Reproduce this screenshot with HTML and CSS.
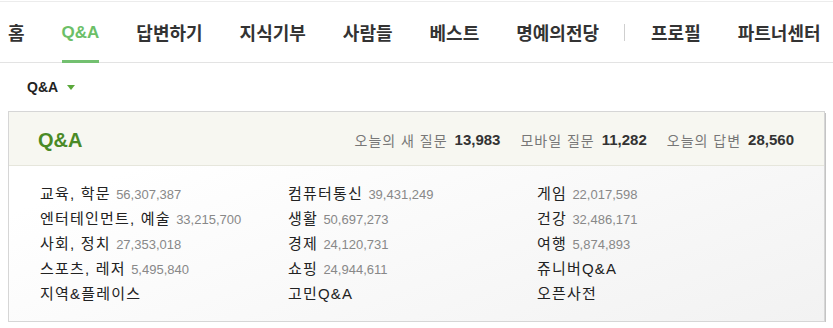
FILE: index.html
```html
<!DOCTYPE html>
<html>
  <head>
    <meta charset="utf-8" />
    <link rel="stylesheet" href="styles.css">
  </head>
  <body>
    <ul class="gnb">
      <li><a href="#">홈</a></li>
      <li class="on"><a href="#">Q&amp;A</a></li>
      <li><a href="#">답변하기</a></li>
      <li><a href="#">지식기부</a></li>
      <li><a href="#">사람들</a></li>
      <li><a href="#">베스트</a></li>
      <li><a href="#">명예의전당</a></li>
      <li class="bar"></li>
      <li><a href="#">프로필</a></li>
      <li><a href="#">파트너센터</a></li>
    </ul>

    <div class="lnb">
      <span class="lnb-title">Q&amp;A</span>
      <span class="caret"></span>
    </div>

    <div class="section">
      <div class="section-head">
        <h2>Q&amp;A</h2>
        <dl class="stats">
          <dt>오늘의 새 질문</dt><dd>13,983</dd>
          <dt>모바일 질문</dt><dd>11,282</dd>
          <dt>오늘의 답변</dt><dd>28,560</dd>
        </dl>
      </div>
      <div class="section-body">
        <ul class="dir">
          <li><a href="#">교육, 학문</a> <span class="cnt">56,307,387</span></li>
          <li><a href="#">엔터테인먼트, 예술</a> <span class="cnt">33,215,700</span></li>
          <li><a href="#">사회, 정치</a> <span class="cnt">27,353,018</span></li>
          <li><a href="#">스포츠, 레저</a> <span class="cnt">5,495,840</span></li>
          <li><a href="#">지역&amp;플레이스</a></li>
        </ul>
        <ul class="dir">
          <li><a href="#">컴퓨터통신</a> <span class="cnt">39,431,249</span></li>
          <li><a href="#">생활</a> <span class="cnt">50,697,273</span></li>
          <li><a href="#">경제</a> <span class="cnt">24,120,731</span></li>
          <li><a href="#">쇼핑</a> <span class="cnt">24,944,611</span></li>
          <li><a href="#">고민Q&amp;A</a></li>
        </ul>
        <ul class="dir">
          <li><a href="#">게임</a> <span class="cnt">22,017,598</span></li>
          <li><a href="#">건강</a> <span class="cnt">32,486,171</span></li>
          <li><a href="#">여행</a> <span class="cnt">5,874,893</span></li>
          <li><a href="#">쥬니버Q&amp;A</a></li>
          <li><a href="#">오픈사전</a></li>
        </ul>
      </div>
    </div>
  </body>
</html>
```

FILE: styles.css
```css
body {
  margin: 0;
  font-family: "Liberation Sans", "Noto Sans CJK KR", sans-serif;
  color: #222;
  background: #fff;
}
a {
  color: inherit;
  text-decoration: none;
}
ul, dl, dd, h2 {
  margin: 0;
  padding: 0;
  list-style: none;
}

.gnb {
  display: flex;
  gap: 37px;
  margin-top: 1px;
  padding-left: 8px;
  height: 60px;
  border-top: 1px solid #ececec;
  border-bottom: 1px solid #e3e3e3;
  font-size: 18px;
  font-weight: 700;
  color: #333;
}
.gnb li {
  display: flex;
  align-items: center;
}
.gnb li.on {
  margin-bottom: -1px;
  padding-top: 3px;
  border-bottom: 3px solid #73c070;
  font-size: 17px;
  color: #6cbf68;
}
.gnb li.bar {
  align-self: center;
  width: 1px;
  height: 17px;
  margin: 0 -11px 0 -12px;
  background: #cfcfcf;
}

.lnb {
  display: flex;
  align-items: center;
  height: 48px;
  padding-left: 27px;
}
.lnb-title {
  font-size: 14px;
  font-weight: 700;
  color: #222;
}
.caret {
  margin-left: 9px;
  border-left: 4px solid transparent;
  border-right: 4px solid transparent;
  border-top: 5px solid #5aa83a;
}

.section {
  margin-left: 8px;
  width: 815px;
  border: 1px solid #d6d6d6;
  box-shadow: 1px 2px 0 #c4c4c4;
  background: linear-gradient(160deg, #ffffff 20%, #f2f2f2 100%);
}
.section-head {
  display: flex;
  align-items: center;
  justify-content: space-between;
  height: 53px;
  padding: 0 30px 0 29px;
  background: #f7f7f1;
  border-bottom: 1px solid #e6e6dc;
}
.section-head h2 {
  font-size: 20px;
  color: #4a8a26;
  margin-top: 3px;
}
.stats {
  display: flex;
  align-items: center;
  margin-top: 2px;
}
.stats dt {
  font-size: 14px;
  letter-spacing: 1px;
  color: #777;
  margin-left: 20px;
}
.stats dt:first-child {
  margin-left: 0;
}
.stats dd {
  margin-left: 7px;
  font-size: 15px;
  font-weight: 700;
  color: #333;
}

.section-body {
  display: grid;
  grid-template-columns: 248px 249px 1fr;
  padding: 15px 0 15px 31px;
}
.dir li {
  height: 25px;
  line-height: 25px;
  font-size: 15px;
  letter-spacing: 1.2px;
  color: #222;
  white-space: nowrap;
}
.dir .cnt {
  font-size: 13px;
  letter-spacing: 0;
  color: #888;
}
```
